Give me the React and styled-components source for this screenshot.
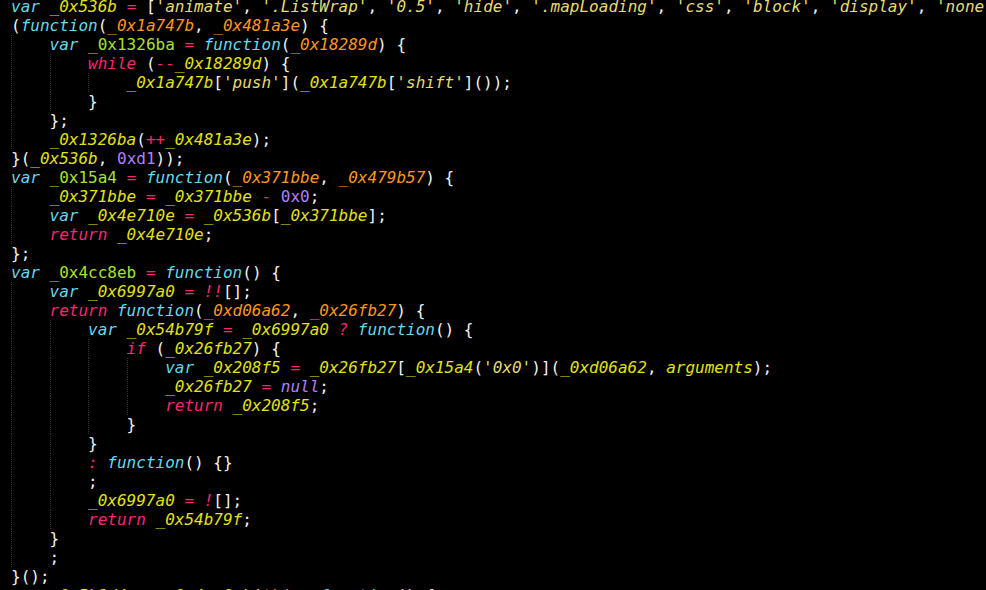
import React from 'react';
import styled, { createGlobalStyle } from 'styled-components';

const GlobalStyle = createGlobalStyle`
  html, body {
    margin: 0;
    padding: 0;
    background: #000;
    overflow: hidden;
  }
`;

// @name = parameter (orange), #name = declared function (green, upright)
const SOURCE = [
  "var _0x536b = ['animate', '.ListWrap', '0.5', 'hide', '.mapLoading', 'css', 'block', 'display', 'none', 'opacity'];",
  "(function(@_0x1a747b, @_0x481a3e) {",
  "    var #_0x1326ba = function(@_0x18289d) {",
  "        while (--_0x18289d) {",
  "            _0x1a747b['push'](_0x1a747b['shift']());",
  "        }",
  "    };",
  "    _0x1326ba(++_0x481a3e);",
  "}(_0x536b, 0xd1));",
  "var #_0x15a4 = function(@_0x371bbe, @_0x479b57) {",
  "    _0x371bbe = _0x371bbe - 0x0;",
  "    var _0x4e710e = _0x536b[_0x371bbe];",
  "    return _0x4e710e;",
  "};",
  "var #_0x4cc8eb = function() {",
  "    var _0x6997a0 = !![];",
  "    return function(@_0xd06a62, @_0x26fb27) {",
  "        var _0x54b79f = _0x6997a0 ? function() {",
  "            if (_0x26fb27) {",
  "                var _0x208f5 = _0x26fb27[_0x15a4('0x0')](_0xd06a62, arguments);",
  "                _0x26fb27 = null;",
  "                return _0x208f5;",
  "            }",
  "        }",
  "        : function() {}",
  "        ;",
  "        _0x6997a0 = ![];",
  "        return _0x54b79f;",
  "    }",
  "    ;",
  "}();",
  "var _0x5b1d4e = _0x4cc8eb(this, function() {",
];

const TOKEN = /('[^']*')|([@#]?_0x[0-9a-f]+)|(0x[0-9a-f]+)|([A-Za-z]+)|(--|\+\+|!!|!|\?|:|=|-)|(\s+)|(.)/g;

const tokenize = (text) => {
  const out = [];
  let m;
  TOKEN.lastIndex = 0;
  while ((m = TOKEN.exec(text))) {
    const [t, str, ident, num, word, op] = m;
    if (str) out.push(['string', t]);
    else if (ident) {
      if (t[0] === '@') out.push(['param', t.slice(1)]);
      else if (t[0] === '#') out.push(['entity', t.slice(1)]);
      else out.push(['ident', t]);
    } else if (num) out.push(['number', t]);
    else if (word) {
      if (word === 'var' || word === 'function') out.push(['storage', t]);
      else if (word === 'while' || word === 'return' || word === 'if') out.push(['keyword', t]);
      else if (word === 'null') out.push(['constant', t]);
      else if (word === 'this') out.push(['param', t]);
      else out.push(['ident', t]);
    } else if (op) out.push(['operator', t]);
    else out.push(['plain', t]);
  }
  return out;
};

const App = () => (
  <>
    <GlobalStyle />
    <Editor>
      {SOURCE.map((line, i) => {
        const body = line.replace(/^ +/, '');
        const depth = (line.length - body.length) / 4;
        return (
          <Line key={i}>
            {Array.from({ length: depth }).map((_, d) => (
              <Indent key={d}>{'    '}</Indent>
            ))}
            {tokenize(body).map(([kind, text], j) => (
              <Token key={j} $kind={kind}>{text}</Token>
            ))}
          </Line>
        );
      })}
    </Editor>
  </>
);

const COLORS = {
  plain: '#f3f3ee',
  string: '#e6db74',
  ident: '#e2e214',
  param: '#fd971f',
  entity: '#a6e22e',
  number: '#ae81ff',
  constant: '#ae81ff',
  storage: '#66d9ef',
  keyword: '#f92672',
  operator: '#f92672',
};

const UPRIGHT = ['plain', 'entity', 'number'];

const Editor = styled.pre`
  margin: -3px 0 0;
  padding: 0 0 0 11px;
  width: 986px;
  height: 593px;
  box-sizing: border-box;
  overflow: hidden;
  background: #000;
  font-family: "DejaVu Sans Mono", "Liberation Mono", monospace;
  font-size: 16px;
  line-height: 19px;
  white-space: pre;
`;

const Line = styled.div`
  display: flex;
  height: 19px;
  white-space: pre;
`;

const Indent = styled.span`
  display: inline-block;
  width: 4ch;
  height: 19px;
  box-sizing: border-box;
  border-left: 1px dotted #333;
  flex: none;
`;

const Token = styled.span`
  color: ${({ $kind }) => COLORS[$kind]};
  font-style: ${({ $kind }) => (UPRIGHT.includes($kind) ? 'normal' : 'italic')};
  white-space: pre;
  flex: none;
`;

export default App;
